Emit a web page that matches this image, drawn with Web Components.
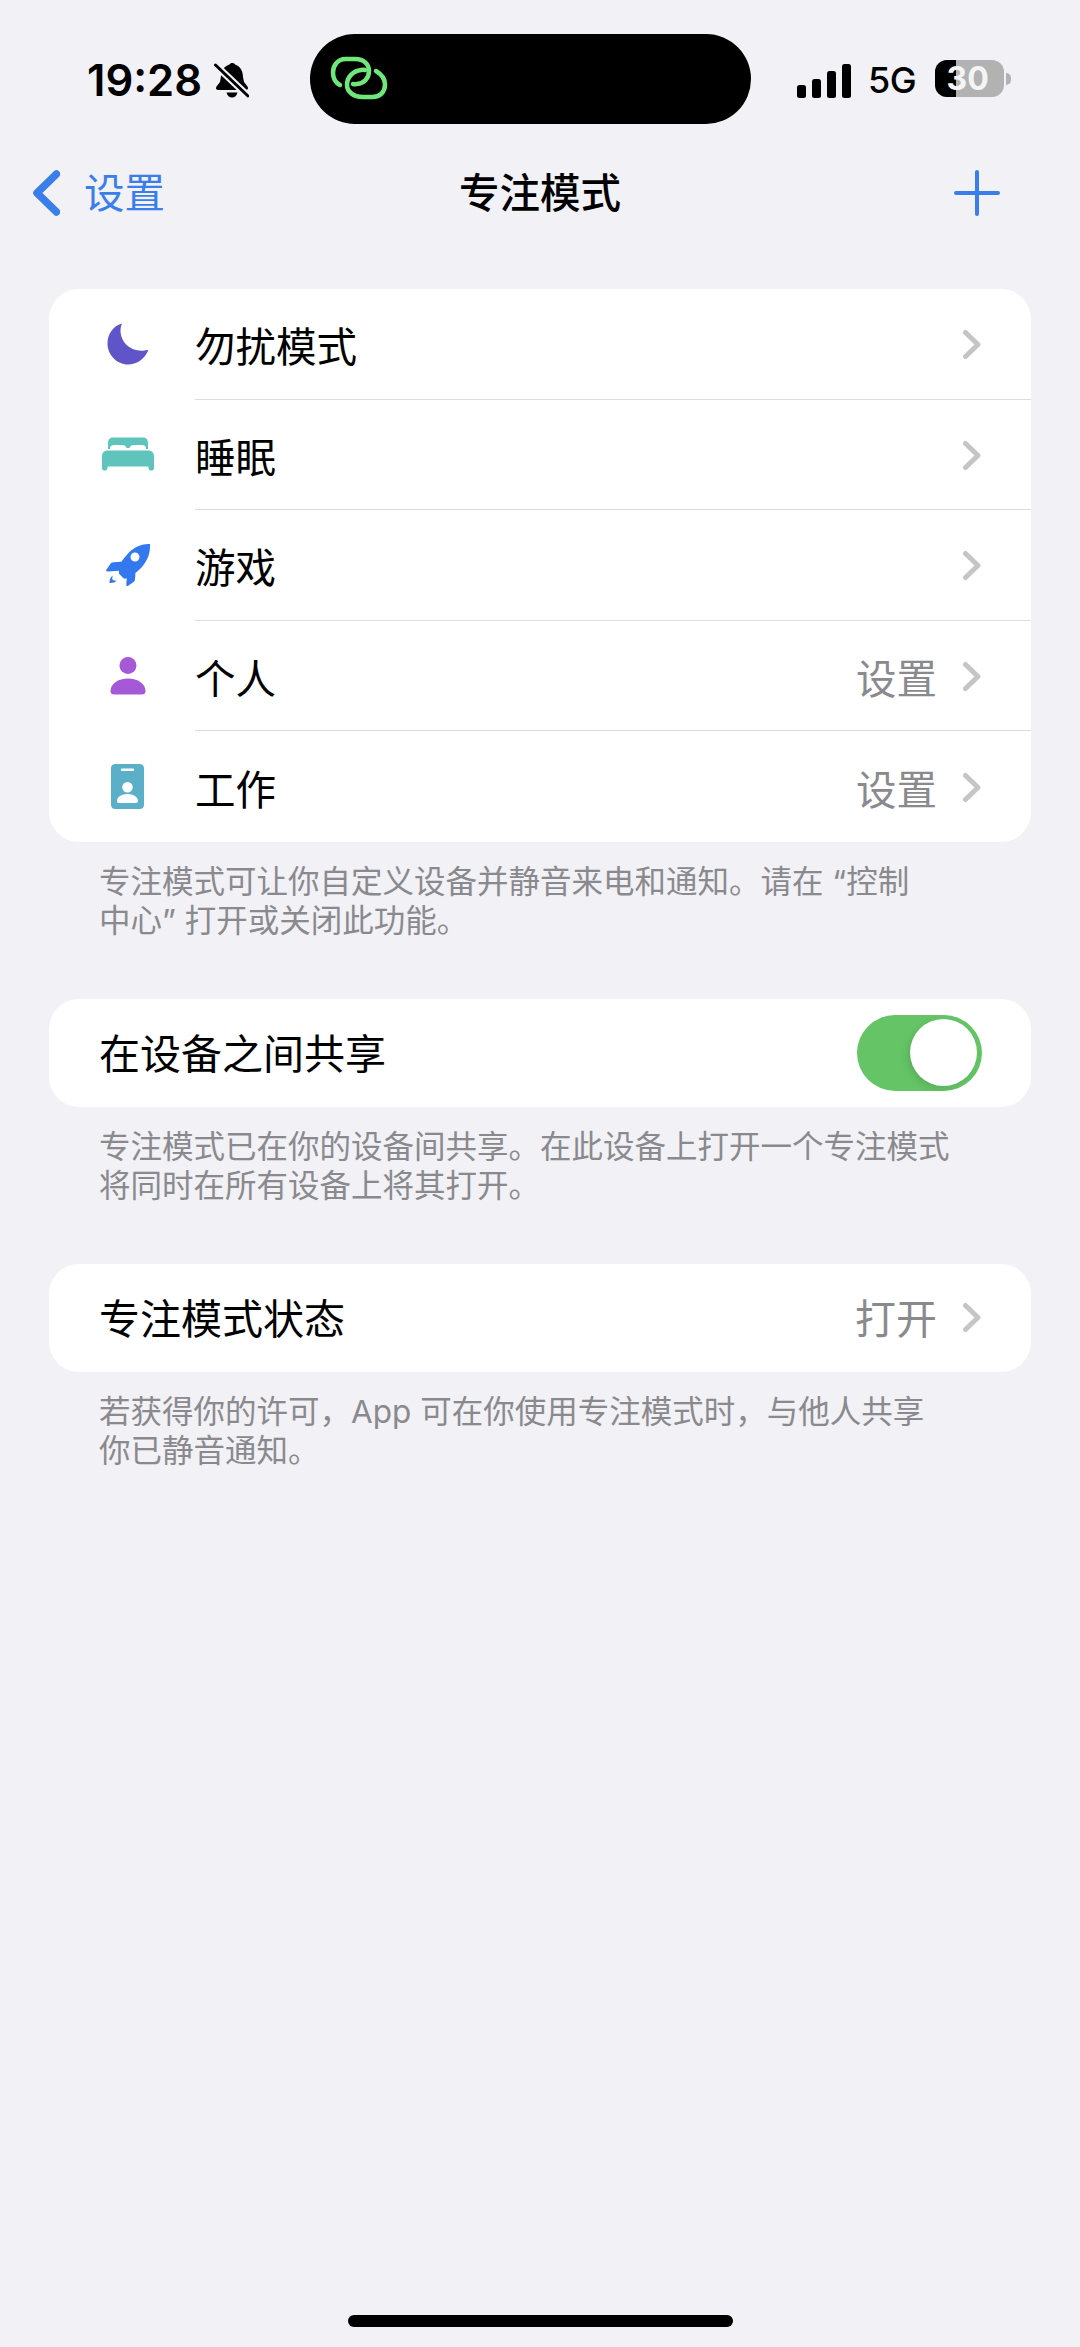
<!DOCTYPE html>
<html lang="zh">
<head>
<meta charset="utf-8">
<title>专注模式</title>
<style>
html, body { margin: 0; padding: 0; background: #f1f1f6; }
body { width: 1080px; height: 2347px; overflow: hidden; font-family: "Noto Sans CJK SC", "Noto Sans", sans-serif; }
</style>
</head>
<body>
<focus-page>
  <status-bar slot="top"></status-bar>
  <nav-bar slot="top" back="设置" title="专注模式"></nav-bar>

  <list-card>
    <list-row icon="moon" color="#5f55c9" label="勿扰模式"></list-row>
    <list-row icon="bed" color="#5fc4bb" label="睡眠"></list-row>
    <list-row icon="rocket" color="#3478f0" label="游戏"></list-row>
    <list-row icon="person" color="#a559d6" label="个人" value="设置"></list-row>
    <list-row icon="badge" color="#5bafc9" label="工作" value="设置" last></list-row>
  </list-card>
  <foot-note>专注模式可让你自定义设备并静音来电和通知。请在 “控制<br>中心” 打开或关闭此功能。</foot-note>

  <list-card single>
    <list-row label="在设备之间共享" toggle last></list-row>
  </list-card>
  <foot-note>专注模式已在你的设备间共享。在此设备上打开一个专注模式<br>将同时在所有设备上将其打开。</foot-note>

  <list-card single>
    <list-row label="专注模式状态" value="打开" last></list-row>
  </list-card>
  <foot-note>若获得你的许可，App 可在你使用专注模式时，与他人共享<br>你已静音通知。</foot-note>

  <home-bar slot="bottom"></home-bar>
</focus-page>

<script>
var CJK = '"Noto Sans CJK SC", "Noto Sans", sans-serif';

var ICONS = {
    moon: '<svg width="42" height="42" viewBox="0 0 42 42"><path d="M15 .5C6 3 .5 11 .5 20.500.5 32 10 41.500 21 41.500c8.500 0 16-5 20-13.500.3-.7-.2-1.200-1-1-1.500.4-3.500.7-5.500.7C23 27.700 13.500 19 13.500 7.500c0-2 .5-4.500 1.500-7z"/></svg>',
    bed: '<svg width="52" height="35" viewBox="0 0 52 35"><path d="M6 12V6c0-3.500 2-5.500 5.500-5.500h29C44 .5 46 2.500 46 6v6h-2c0-3-1.500-4-4-4h-8c-2.500 0-4 1-4.500 3h-3C24 9 22.500 8 20 8h-8c-2.500 0-4 1-4 4H6z"/><path d="M5.500 13.500h41C50 13.500 52 16 52 19.500V31c0 1.500-.8 2.500-2 2.500h-1.500c-1 0-1.700-.8-2-2.500l-.3-1.500H5.800L5.500 31c-.3 1.700-1 2.500-2 2.500H2c-1.200 0-2-1-2-2.500V19.500c0-3.500 2-6 5.500-6z"/></svg>',
    rocket: '<svg width="46" height="44" viewBox="0 0 46 44"><path fill-rule="evenodd" d="M45 1c.5 8-2 16-8 23-2 2.200-4 4-6.500 5.800l-.5 6.500c-.1 1.500-.7 2.300-1.800 3l-5 3.500c-1.200.7-2 .2-1.900-1.200l.4-6.300c-1.600.7-2.700.3-3.700-.6l-3.200-3.200c-1-1-1.300-2.200-.6-3.700l-11.500.6c-1.400.1-2-.8-1.200-2l3.800-5.300c.8-1.100 1.600-1.700 3-1.800l8-.5c1.700-2.500 3.500-4.700 5.500-6.700C27 5 36 .5 45 1zM30 9.500a4.500 4.500 0 1 0 0 9 4.500 4.500 0 0 0 0-9z"/><path d="M8 32.500c-2.500 1.500-3.500 4-3.500 7.500 3 .2 6-.7 7.500-2.500-2 .5-4-.2-4.500-1-.5-1-.2-2.500.5-4z"/></svg>',
    person: '<svg width="36" height="38" viewBox="0 0 36 38"><circle cx="18" cy="8.500" r="8.500"/><path d="M18 21.500c10 0 17.500 5.500 17.500 12.500 0 2.300-1.200 3.500-3.500 3.500H4C1.700 37.500.5 36.300.5 34 .5 27 8 21.500 18 21.500z"/></svg>',
    badge: '<svg width="33" height="45" viewBox="0 0 33 45"><path fill-rule="evenodd" d="M4.500 0h24C31.500 0 33 1.500 33 4.500v36c0 3-1.500 4.500-4.500 4.500h-24C1.500 45 0 43.500 0 40.500v-36C0 1.500 1.500 0 4.500 0zM11 4.500a1.200 1.200 0 0 0 0 2.400h11a1.200 1.200 0 0 0 0-2.400H11zM16.500 18a5.300 5.300 0 1 0 0 10.600 5.300 5.300 0 0 0 0-10.600zM16.500 30c-6 0-10.500 3-10.500 7 0 1.200.7 2 2 2h17c1.300 0 2-.8 2-2 0-4-4.500-7-10.500-7z"/></svg>'
};

class focusPage extends HTMLElement{
    constructor(){
        super();
        this.shadow = this.attachShadow({mode :'open'});
    }
    connectedCallback(){
        this.shadow.innerHTML = `
        <style>
        :host { display: flex; flex-direction: column; height: 2347px; box-sizing: border-box; }
        .content { flex: 1; display: flex; flex-direction: column; padding: 0 49px; }
        </style>
        <slot name="top"></slot>
        <div class="content"><slot></slot></div>
        <slot name="bottom"></slot>
        `;
    }
}

class statusBar extends HTMLElement{
    constructor(){
        super();
        this.shadow = this.attachShadow({mode :'open'});
    }
    connectedCallback(){
        this.shadow.innerHTML = `
        <style>
        :host { display: block; height: 129px; position: relative; color: #000; }
        .left, .right { position: absolute; display: flex; align-items: center; }
        .left { left: 87px; top: 55px; height: 50px; }
        .time { font: 600 43.500px/50px Inter, "Liberation Sans", sans-serif; }
        .bell { margin-left: 12px; display: block; }
        .island {
            position: absolute; left: 310px; top: 34px; width: 441px; height: 90px;
            background: #000; border-radius: 45px;
        }
        .island svg { position: absolute; left: 20px; top: 22px; }
        .right { left: 797px; top: 55px; height: 50px; }
        .signal { display: flex; align-items: flex-end; gap: 6px; height: 34px; margin-top: 2px; }
        .signal i { display: block; width: 9px; background: #000; border-radius: 2.500px; }
        .net { font: 500 36px/50px Inter, "Liberation Sans", sans-serif; margin-left: 17px; letter-spacing: -.5px; }
        .batt {
            position: relative; width: 69px; height: 37px; margin-left: 19px; margin-top: -3px;
            border-radius: 12px; background: #b2b2b2;
        }
        .batt b { position: absolute; left: 0; top: 0; bottom: 0; width: 21px; background: #000; border-radius: 12px 0 0 12px; }
        .batt span {
            position: absolute; left: 0; right: 4px; top: 0; text-align: center;
            font: 700 32px/37px Inter, "Liberation Sans", sans-serif; color: #f4f4f4;
        }
        .cap { width: 5px; height: 12px; margin-left: 2px; margin-top: -3px; background: #b2b2b2; border-radius: 0 6px 6px 0; }
        </style>
        <div class="left">
            <span class="time">19:28</span>
            <svg class="bell" width="35" height="37" viewBox="0 0 35 37">
                <path d="M15.500 2.500C16.500.5 20 .5 21 2.500c5 1.500 8 6.500 8 12.500l1 5 3.500 4.500c1.200 2 .2 3.500-2 3.500H4.500c-2.200 0-3.200-1.500-2-3.500L6 20l1-6c.2-5.500 3.500-10 8.500-11.500z" fill="#000"/>
                <path d="M12.500 30.500h11c-.5 3-3 5-5.500 5s-5-2-5.500-5z" fill="#000"/>
                <path d="M1.500 3 34 34" stroke="#f1f1f6" stroke-width="7"/>
                <path d="M1.500 3 34 34" stroke="#000" stroke-width="3" stroke-linecap="round"/>
            </svg>
        </div>
        <div class="island">
            <svg width="58" height="46" viewBox="0 0 58 46" fill="none" stroke="#6ee87a" stroke-width="4.500" stroke-linecap="round" stroke-linejoin="round">
                <path d="M10 29C6 27 3 23 3 16.500 3 9 8 3 15.500 3h10C33.500 3 39 8 39 15c0 7-5 12.500-12 13-2 .2-3 .2-4 0"/>
                <path d="M46 15c5 3 9 7 9 13.500C55 36 50 41 42.500 41h-10C24 41 17 36 17 29c0-8 6-14 14-15 2-.2 3-.2 4 0"/>
            </svg>
        </div>
        <div class="right">
            <div class="signal"><i style="height:13px"></i><i style="height:19px"></i><i style="height:27px"></i><i style="height:34px"></i></div>
            <span class="net">5G</span>
            <div class="batt"><b></b><span>30</span></div>
            <div class="cap"></div>
        </div>
        `;
    }
}

class navBar extends HTMLElement{
    constructor(){
        super();
        this.shadow = this.attachShadow({mode :'open'});
    }
    connectedCallback(){
        this.shadow.innerHTML = `
        <style>
        :host { display: block; height: 160px; position: relative; font-family: ${CJK}; }
        .bar { display: flex; align-items: center; justify-content: space-between; height: 127px; padding: 0 80px 0 33px; box-sizing: border-box; }
        .back { display: flex; align-items: center; gap: 24px; color: #3a7eea; font-size: 40.500px; line-height: 60px; }
        .back span { position: relative; top: -2px; }
        .back svg, .plus { display: block; }
        .title { position: absolute; left: 0; right: 0; top: -2px; height: 127px; line-height: 127px; text-align: center; font-size: 40.500px; font-weight: 500; color: #000; }
        .plus { position: relative; }
        </style>
        <div class="bar">
            <div class="back">
                <svg width="27" height="46" viewBox="0 0 27 46" fill="none" stroke="#3a7eea" stroke-width="7.500" stroke-linecap="round" stroke-linejoin="round"><path d="M23.500 4 4 23l19.500 19"/></svg>
                <span>${this.getAttribute('back')}</span>
            </div>
            <div class="title">${this.getAttribute('title')}</div>
            <svg class="plus" width="46" height="46" viewBox="0 0 46 46" stroke="#3a7eea" stroke-width="4" stroke-linecap="round"><path d="M23 2v42M2 23h42"/></svg>
        </div>
        `;
    }
}

class listCard extends HTMLElement{
    constructor(){
        super();
        this.shadow = this.attachShadow({mode :'open'});
    }
    connectedCallback(){
        this.shadow.innerHTML = `
        <style>
        :host { display: block; background: #fff; border-radius: 30px; overflow: hidden; }
        :host([single]) { --row-h: 108px; --row-pad: 50px; --row-font: 41px; --text-top: -2px; --chev-top: 0; }
        </style>
        <slot></slot>
        `;
    }
}

class listRow extends HTMLElement{
    constructor(){
        super();
        this.shadow = this.attachShadow({mode :'open'});
    }
    connectedCallback(){
        var icon = this.getAttribute('icon');
        var color = this.getAttribute('color');
        var value = this.getAttribute('value');
        var iconHtml = icon ? `<div class="icon" style="fill:${color}">${ICONS[icon]}</div>` : '';
        var right = '';
        if (this.hasAttribute('toggle')) {
            right = '<focus-toggle></focus-toggle>';
        } else {
            right = (value ? `<span class="value">${value}</span>` : '') +
                `<svg class="chev" width="19" height="31" viewBox="0 0 19 31" fill="none" stroke="#c5c5c7" stroke-width="5" stroke-linecap="round" stroke-linejoin="round"><path d="M3.500 3.500 16 15.500 3.500 27.500"/></svg>`;
        }
        this.shadow.innerHTML = `
        <style>
        :host { display: flex; height: var(--row-h, 110.600px); padding-left: var(--row-pad, 0); font-family: ${CJK}; font-size: var(--row-font, 40.500px); color: #000; }
        .icon { width: 146px; flex: none; display: flex; align-items: center; justify-content: center; padding-left: 11px; box-sizing: border-box; }
        .icon svg { display: block; }
        .main { flex: 1; display: flex; align-items: center; padding-right: 50px; border-bottom: 1.500px solid #dcdcde; box-sizing: border-box; min-width: 0; }
        :host([last]) .main { border-bottom: 0; }
        .label { flex: 1; position: relative; top: var(--text-top, 1px); }
        .value { color: #8a8a8e; position: relative; top: var(--text-top, 1px); margin-right: 25px; }
        .chev { display: block; position: relative; top: var(--chev-top, 1px); }
        </style>
        ${iconHtml}
        <div class="main">
            <span class="label">${this.getAttribute('label')}</span>
            ${right}
        </div>
        `;
    }
}

class focusToggle extends HTMLElement{
    constructor(){
        super();
        this.shadow = this.attachShadow({mode :'open'});
    }
    connectedCallback(){
        this.shadow.innerHTML = `
        <style>
        :host { display: block; width: 125px; height: 76px; background: #65c466; border-radius: 38px; position: relative; margin-right: -1px; }
        .knob { position: absolute; right: 5px; top: 4px; width: 67px; height: 67px; border-radius: 50%; background: #fff; box-shadow: -3px 3px 7px rgba(0,0,0,.1); }
        </style>
        <div class="knob"></div>
        `;
    }
}

class footNote extends HTMLElement{
    constructor(){
        super();
        this.shadow = this.attachShadow({mode :'open'});
    }
    connectedCallback(){
        this.shadow.innerHTML = `
        <style>
        :host { display: block; padding: 20px 50px 0 50px; height: 157px; box-sizing: border-box; font-family: Inter, ${CJK}; font-size: 31.500px; line-height: 39.500px; color: #8a8a8e; white-space: nowrap; }
        </style>
        <slot></slot>
        `;
    }
}

class homeBar extends HTMLElement{
    constructor(){
        super();
        this.shadow = this.attachShadow({mode :'open'});
    }
    connectedCallback(){
        this.shadow.innerHTML = `
        <style>
        :host { display: flex; justify-content: center; padding-bottom: 20px; }
        div { width: 385px; height: 12px; background: #000; border-radius: 6px; }
        </style>
        <div></div>
        `;
    }
}

customElements.define('focus-page', focusPage);
customElements.define('status-bar', statusBar);
customElements.define('nav-bar', navBar);
customElements.define('list-card', listCard);
customElements.define('list-row', listRow);
customElements.define('focus-toggle', focusToggle);
customElements.define('foot-note', footNote);
customElements.define('home-bar', homeBar);
</script>
</body>
</html>
